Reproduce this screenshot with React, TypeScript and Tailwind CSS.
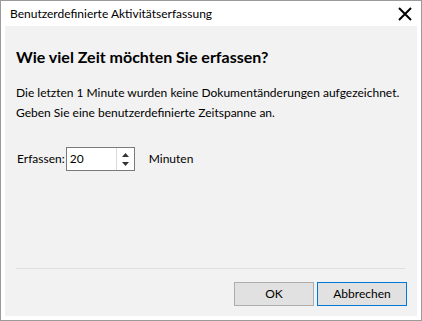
import React from "react";

const font = { fontFamily: 'Lato, "Noto Sans", sans-serif' };

function Spinner() {
  return (
    <div className="flex h-[24px] w-[69px] border border-[#7a7a7a] bg-white">
      <div className="flex flex-1 items-center pl-[3px] text-[12px] text-black">20</div>
      <div className="flex w-[18px] flex-col items-center justify-center gap-[5px] border-l border-[#d9d9d9] bg-white">
        <svg width="7" height="4" viewBox="0 0 7 4">
          <path d="M0 4 L3.5 0 L7 4 Z" fill="#333" />
        </svg>
        <svg width="7" height="4" viewBox="0 0 7 4">
          <path d="M0 0 L3.5 4 L7 0 Z" fill="#333" />
        </svg>
      </div>
    </div>
  );
}

export default function App() {
  return (
    <div
      style={font}
      className="flex h-[321px] w-[422px] flex-col border border-[#9b9b9b] bg-white text-[#000]"
    >
      <div className="flex h-[25px] items-center justify-between pl-[9px] pr-[9px]">
        <span className="whitespace-nowrap text-[12px] text-[#000]">Benutzerdefinierte Aktivitätserfassung</span>
        <svg width="14" height="14" viewBox="0 0 14 14">
          <path d="M1 1 L13 13 M13 1 L1 13" stroke="#000" strokeWidth="2" />
        </svg>
      </div>
      <div className="mx-[4px] mb-[4px] flex flex-1 flex-col bg-[#f2f2f2]">
        <h1 className="ml-[11px] mt-[21px] whitespace-nowrap text-[16px] font-bold leading-[20px]">
          Wie viel Zeit möchten Sie erfassen?
        </h1>
        <div className="ml-[11px] mt-[16px] whitespace-nowrap text-[12px] leading-[20px]">
          <p>Die letzten 1 Minute wurden keine Dokumentänderungen aufgezeichnet.</p>
          <p>Geben Sie eine benutzerdefinierte Zeitspanne an.</p>
        </div>
        <div className="ml-[12px] mt-[24px] flex items-center text-[12px]">
          <span className="mr-[1px]">Erfassen:</span>
          <Spinner />
          <span className="ml-[14px]">Minuten</span>
        </div>
        <div className="flex-1" />
        <div className="ml-[11px] mr-[12px] h-px bg-[#dfdfdf]" />
        <div className="mb-[10px] mr-[10px] mt-[13px] flex justify-end gap-[3px]">
          <button className="h-[24px] w-[80px] border border-[#adadad] bg-[#e1e1e1] text-[12px]">
            OK
          </button>
          <button className="h-[24px] w-[90px] border border-[#0078d7] bg-[#e1e1e1] text-[12px]">
            Abbrechen
          </button>
        </div>
      </div>
    </div>
  );
}
